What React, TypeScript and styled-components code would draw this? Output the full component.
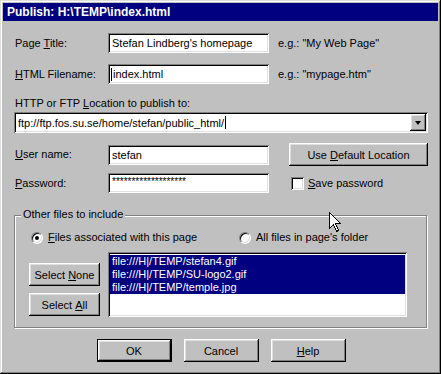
import styled, { createGlobalStyle } from "styled-components";

const GlobalStyle = createGlobalStyle`
  body {
    margin: 0;
    background: #c0c0c0;
    font-family: "Liberation Sans", Arial, sans-serif;
    font-size: 11px;
    color: #000;
  }
  u { text-underline-offset: 1px; }
`;

const raised = `
  box-shadow: inset -1px -1px #000, inset 1px 1px #fff,
    inset -2px -2px #808080, inset 2px 2px #dfdfdf;
`;

const sunken = `
  box-shadow: inset 1px 1px #808080, inset -1px -1px #fff,
    inset 2px 2px #000, inset -2px -2px #dfdfdf;
`;

const Window = styled.div`
  position: relative;
  width: 441px;
  height: 374px;
  box-sizing: border-box;
  padding: 3px;
  background: #c0c0c0;
  box-shadow: inset -1px -1px #000, inset 1px 1px #dfdfdf,
    inset -2px -2px #808080, inset 2px 2px #fff;
  display: flex;
  flex-direction: column;
`;

const TitleBar = styled.div`
  height: 18px;
  line-height: 18px;
  padding-left: 4px;
  background: #000080;
  color: #fff;
  font-weight: bold;
  font-size: 12px;
  white-space: nowrap;
`;

const Body = styled.div`
  padding: 12px 10px 0 11px;
  display: flex;
  flex-direction: column;
`;

const FieldGrid = styled.div<{ $gap: number; $top?: number }>`
  display: grid;
  grid-template-columns: 94px 161px 1fr;
  align-items: center;
  row-gap: ${(p) => p.$gap}px;
  margin-top: ${(p) => p.$top ?? 0}px;
`;

const Label = styled.div`
  padding-left: 1px;
  line-height: 13px;
  white-space: nowrap;
`;

const Hint = styled.div`
  margin-left: 9px;
  white-space: nowrap;
`;

const EditBox = styled.div`
  height: 20px;
  box-sizing: border-box;
  padding: 0 2px 0 4px;
  background: #fff;
  ${sunken}
  display: flex;
  align-items: center;
  white-space: nowrap;
  overflow: hidden;
`;

const Caret = styled.span<{ $left?: number }>`
  display: inline-block;
  width: 1px;
  height: 13px;
  background: #000;
  margin-left: ${(p) => p.$left ?? 0}px;
`;

const Mask = styled.span`
  font-size: 10px;
  letter-spacing: 0;
  position: relative;
  top: -2px;
`;

const LocationLabel = styled(Label)`
  margin-top: 13px;
`;

const Combo = styled.div`
  margin-top: 2px;
  height: 21px;
  box-sizing: border-box;
  padding: 2px 2px 2px 4px;
  background: #fff;
  ${sunken}
  display: flex;
  align-items: center;
`;

const ComboText = styled.div`
  flex: 1;
  white-space: nowrap;
  display: flex;
  align-items: center;
`;

const DropButton = styled.div`
  width: 16px;
  height: 17px;
  background: #c0c0c0;
  ${raised}
  display: flex;
  align-items: center;
  justify-content: center;
`;

const Arrow = styled.div`
  width: 0;
  height: 0;
  border-left: 3.5px solid transparent;
  border-right: 3.5px solid transparent;
  border-top: 4px solid #000;
`;

const Button = styled.div<{ $width: number; $default?: boolean }>`
  width: ${(p) => p.$width}px;
  height: 23px;
  box-sizing: border-box;
  background: #c0c0c0;
  display: flex;
  align-items: center;
  justify-content: center;
  white-space: nowrap;
  ${(p) =>
    p.$default
      ? `box-shadow: inset 0 0 0 1px #000, inset -2px -2px #000, inset 2px 2px #fff,
          inset -3px -3px #808080, inset 3px 3px #dfdfdf;`
      : raised}
`;

const SideButton = styled(Button)`
  margin-left: 20px;
`;

const CheckRow = styled.div`
  margin-left: 22px;
  display: flex;
  align-items: center;
  gap: 4px;
`;

const CheckBox = styled.div`
  width: 13px;
  height: 13px;
  box-sizing: border-box;
  background: #fff;
  ${sunken}
`;

const Group = styled.div`
  position: relative;
  margin: 22px 1px 0 0;
  border: 1px solid #808080;
  box-shadow: inset 1px 1px #fff, 1px 1px #fff;
  padding: 15px 0 10px 14px;
`;

const Legend = styled.span`
  position: absolute;
  top: -8px;
  left: 6px;
  padding: 0 2px;
  line-height: 13px;
  background: #c0c0c0;
`;

const RadioRow = styled.div`
  display: grid;
  grid-template-columns: 208px auto;
  padding-left: 2px;
  line-height: 13px;
`;

const RadioOption = styled.div`
  display: flex;
  align-items: center;
  gap: 5px;
  white-space: nowrap;
`;

const Radio = styled.div<{ $checked?: boolean }>`
  position: relative;
  width: 12px;
  height: 12px;
  box-sizing: border-box;
  border-radius: 50%;
  background: #fff;
  border: 1px solid;
  border-color: #808080 #fff #fff #808080;
  box-shadow: inset 1px 1px #000, inset -1px -1px #dfdfdf;
  &::after {
    content: "";
    display: ${(p) => (p.$checked ? "block" : "none")};
    position: absolute;
    left: 3px;
    top: 3px;
    width: 4px;
    height: 4px;
    border-radius: 50%;
    background: #000;
  }
`;

const FilesRow = styled.div`
  display: flex;
  gap: 8px;
  margin-top: 8px;
`;

const ButtonColumn = styled.div`
  display: flex;
  flex-direction: column;
  justify-content: flex-end;
  gap: 7px;
  padding-bottom: 1px;
`;

const ListBox = styled.div`
  width: 299px;
  height: 65px;
  box-sizing: border-box;
  padding: 3px 2px 2px;
  background: #fff;
  ${sunken}
`;

const ListItem = styled.div<{ $selected?: boolean }>`
  height: 13px;
  line-height: 13px;
  padding-left: 2px;
  white-space: nowrap;
  background: ${(p) => (p.$selected ? "#000080" : "transparent")};
  color: ${(p) => (p.$selected ? "#fff" : "#000")};
`;

const Footer = styled.div`
  display: flex;
  justify-content: center;
  gap: 12px;
  margin-top: 11px;
`;

const Cursor = styled.svg`
  position: absolute;
  left: 329px;
  top: 212px;
`;

const files = [
  "file:///H|/TEMP/stefan4.gif",
  "file:///H|/TEMP/SU-logo2.gif",
  "file:///H|/TEMP/temple.jpg",
];

export default function App() {
  return (
    <>
      <GlobalStyle />
      <Window>
        <TitleBar>Publish: H:\TEMP\index.html</TitleBar>
        <Body>
          <FieldGrid $gap={11}>
            <Label>
              Page <u>T</u>itle:
            </Label>
            <EditBox>Stefan Lindberg's homepage</EditBox>
            <Hint>e.g.: "My Web Page"</Hint>
            <Label>
              <u>H</u>TML Filename:
            </Label>
            <EditBox style={{ paddingLeft: 3 }}>
              <Caret />
              <span style={{ marginLeft: 1 }}>index.html</span>
            </EditBox>
            <Hint>e.g.: "mypage.htm"</Hint>
          </FieldGrid>

          <LocationLabel>
            HTTP or FTP <u>L</u>ocation to publish to:
          </LocationLabel>
          <Combo>
            <ComboText>
              ftp://ftp.fos.su.se/home/stefan/public_html/
              <Caret $left={1} />
            </ComboText>
            <DropButton>
              <Arrow />
            </DropButton>
          </Combo>

          <FieldGrid $gap={7} $top={10}>
            <Label>
              <u>U</u>ser name:
            </Label>
            <EditBox>stefan</EditBox>
            <SideButton $width={139}>
              Use&nbsp;<u>D</u>efault Location
            </SideButton>
            <Label>
              <u>P</u>assword:
            </Label>
            <EditBox>
              <Mask>*******************</Mask>
            </EditBox>
            <CheckRow>
              <CheckBox />
              <span>
                <u>S</u>ave password
              </span>
            </CheckRow>
          </FieldGrid>

          <Group>
            <Legend>Other files to include</Legend>
            <RadioRow>
              <RadioOption>
                <Radio $checked />
                <span>
                  <u>F</u>iles associated with this page
                </span>
              </RadioOption>
              <RadioOption>
                <Radio />
                <span>All files in page's folder</span>
              </RadioOption>
            </RadioRow>
            <FilesRow>
              <ButtonColumn>
                <Button $width={71}>
                  Select&nbsp;<u>N</u>one
                </Button>
                <Button $width={71}>
                  Select&nbsp;<u>A</u>ll
                </Button>
              </ButtonColumn>
              <ListBox>
                {files.map((f) => (
                  <ListItem key={f} $selected>
                    {f}
                  </ListItem>
                ))}
              </ListBox>
            </FilesRow>
          </Group>

          <Footer>
            <Button $width={75} $default>
              OK
            </Button>
            <Button $width={75}>Cancel</Button>
            <Button $width={75}>
              <u>H</u>elp
            </Button>
          </Footer>
        </Body>
        <Cursor width="13" height="21" viewBox="0 0 13 21">
          <path
            d="M0.5 0.5 L0.5 16.5 L4.5 12.5 L7.5 19.5 L9.5 18.5 L6.5 11.5 L11.5 11.5 Z"
            fill="#fff"
            stroke="#000"
            strokeWidth="1"
            shapeRendering="crispEdges"
          />
        </Cursor>
      </Window>
    </>
  );
}
